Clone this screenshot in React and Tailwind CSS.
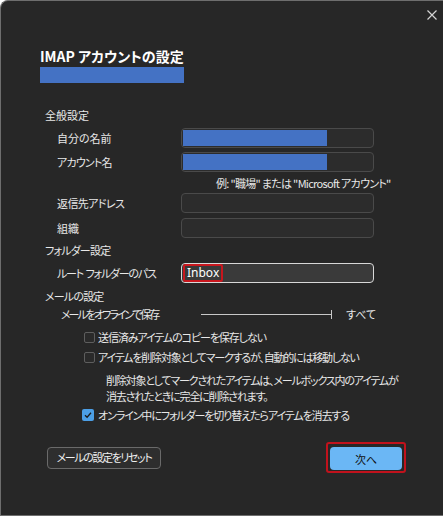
export default function App() {
  return (
    <div className="w-[443px] h-[516px] bg-[#272727] border-t border-l border-b border-[#6e6e6e] rounded-tl-[8px] relative overflow-hidden text-[#e8e8e8] font-['Noto_Sans_CJK_JP','Noto_Sans',sans-serif] [font-feature-settings:'palt'] pl-[39px] pt-[45px]">
      {/* close */}
      <svg className="absolute right-[6px] top-[9px]" width="10" height="10" viewBox="0 0 10 10">
        <path d="M0.5 0.5 L9.5 9.5 M9.5 0.5 L0.5 9.5" stroke="#d4d4d4" strokeWidth="1.2" fill="none" />
      </svg>

      <div className="h-[20px] leading-[20px] text-[14px] font-bold text-white">IMAP アカウントの設定</div>
      <div className="mt-[1px] h-[16px] w-[144px] bg-[#4472c4]"></div>

      {/* 全般設定 */}
      <div className="mt-[24px] h-[16px] leading-[16px] text-[11px] pl-[5px]">全般設定</div>
      <div className="mt-[5px] h-[20px] flex items-center">
        <div className="w-[141px] pl-[17px] text-[11px]">自分の名前</div>
        <div className="w-[193px] h-[20px] border border-[#4a4a4a] rounded-[4px] bg-[#2c2c2c] p-[1px]">
          <div className="h-full w-[144px] bg-[#4472c4]"></div>
        </div>
      </div>
      <div className="mt-[4px] h-[20px] flex items-center">
        <div className="w-[141px] pl-[17px] text-[11px] tracking-[-0.8px]">アカウント名</div>
        <div className="w-[193px] h-[20px] border border-[#4a4a4a] rounded-[4px] bg-[#2c2c2c] p-[1px]">
          <div className="h-full w-[144px] bg-[#4472c4]"></div>
        </div>
      </div>
      <div className="mt-[3px] h-[16px] leading-[16px] text-[11px] pl-[176px] whitespace-nowrap tracking-[-0.7px]">
        例: "職場" または "Microsoft アカウント"
      </div>
      <div className="mt-[2px] h-[20px] flex items-center">
        <div className="w-[141px] pl-[17px] text-[11px] tracking-[-0.6px]">返信先アドレス</div>
        <div className="w-[193px] h-[20px] border border-[#4a4a4a] rounded-[4px] bg-[#2c2c2c]"></div>
      </div>
      <div className="mt-[5px] h-[20px] flex items-center">
        <div className="w-[141px] pl-[17px] text-[11px]">組織</div>
        <div className="w-[193px] h-[20px] border border-[#4a4a4a] rounded-[4px] bg-[#2c2c2c]"></div>
      </div>

      {/* フォルダー設定 */}
      <div className="mt-[4px] h-[16px] leading-[16px] text-[11px] pl-[5px] tracking-[-0.8px]">フォルダー設定</div>
      <div className="mt-[5px] h-[20px] flex items-center">
        <div className="w-[141px] pl-[17px] text-[11px] tracking-[-1.2px] whitespace-nowrap">ルート&nbsp; フォルダーのパス</div>
        <div className="w-[193px] h-[20px] border border-[#d8d8d8] rounded-[4px] bg-[#3a3a3a] flex items-stretch pl-[1px]">
          <span className="border-2 border-[#c8161d] rounded-[2px] px-[2px] text-[12px] leading-[14px] text-white font-['Noto_Sans',sans-serif]">Inbox</span>
        </div>
      </div>

      {/* メールの設定 */}
      <div className="mt-[5px] h-[16px] leading-[16px] text-[11px] pl-[5px] tracking-[-0.8px]">メールの設定</div>
      <div className="mt-[2px] h-[16px] flex items-center">
        <div className="w-[161px] pl-[21px] text-[11px] whitespace-nowrap tracking-[-2px]">メールをオフラインで保存</div>
        <div className="w-[130px] h-[1px] bg-[#c8c8c8]"></div>
        <div className="w-[1px] h-[9px] bg-[#c8c8c8]"></div>
        <div className="ml-[14px] text-[11px]">すべて</div>
      </div>

      <div className="mt-[7px] h-[16px] flex items-center pl-[44px]">
        <div className="w-[11px] h-[11px] border border-[#5e5e5e] rounded-[2px] bg-[#2a2a2a]"></div>
        <div className="ml-[3px] text-[11px] whitespace-nowrap tracking-[-1.1px]">送信済みアイテムのコピーを保存しない</div>
      </div>
      <div className="mt-[4px] h-[16px] flex items-center pl-[44px]">
        <div className="w-[11px] h-[11px] border border-[#5e5e5e] rounded-[2px] bg-[#2a2a2a]"></div>
        <div className="ml-[3px] text-[11px] whitespace-nowrap tracking-[-1.2px]">アイテムを削除対象としてマークするが、自動的には移動しない</div>
      </div>
      <div className="mt-[7px] pl-[66px] text-[11px] leading-[16px] tracking-[-1.2px]">
        <div className="whitespace-nowrap">削除対象としてマークされたアイテムは、メールボックス内のアイテムが</div>
        <div className="whitespace-nowrap">消去されたときに完全に削除されます。</div>
      </div>
      <div className="mt-[3px] h-[16px] flex items-center pl-[42px]">
        <div className="w-[12px] h-[12px] rounded-[2px] bg-[#4c9fe6] flex items-center justify-center">
          <svg width="8" height="8" viewBox="0 0 8 8">
            <path d="M1 4.2 L3.1 6.2 L7 1.8" stroke="#1b1b1b" strokeWidth="1.3" fill="none" />
          </svg>
        </div>
        <div className="ml-[4px] text-[11px] whitespace-nowrap tracking-[-1.1px]">オンライン中にフォルダーを切り替えたらアイテムを消去する</div>
      </div>

      {/* buttons */}
      <div className="mt-[20px] h-[29px] flex items-center">
        <button className="ml-[7px] w-[114px] h-[22px] border border-[#6a6a6a] rounded-[4px] bg-[#2e2e2e] text-[11px] text-[#f0f0f0] tracking-[-1.4px]">
          メールの設定をリセット
        </button>
        <div className="ml-[165px] border-2 border-[#c1121c] rounded-[3px] px-[2px] py-[1px]">
          <button className="w-[72px] h-[23px] rounded-[4px] bg-[#6bb7f5] text-[11px] text-[#111]">次へ</button>
        </div>
      </div>
    </div>
  );
}
